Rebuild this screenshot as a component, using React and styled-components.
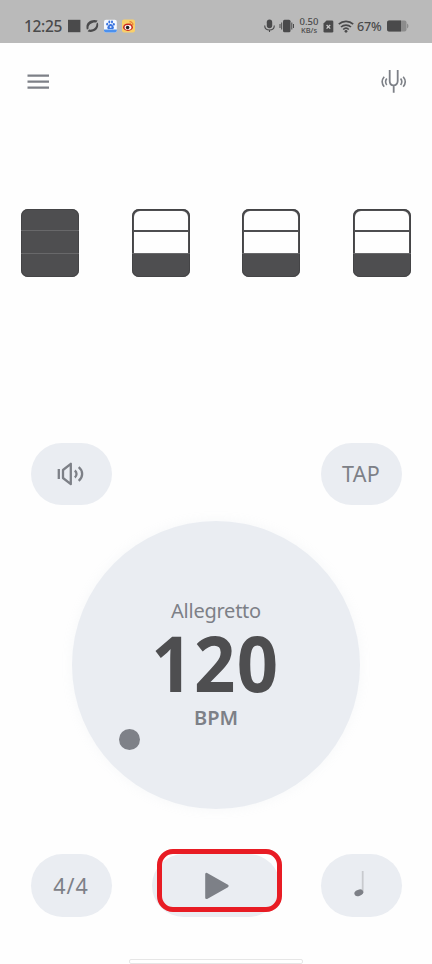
import React from 'react';
import styled, { createGlobalStyle } from 'styled-components';


const GlobalStyle = createGlobalStyle`
    * {
        box-sizing: border-box;
    }

    body {
        margin: 0;
        background-color: #fff;
        font-family: 'Noto Sans', 'Open Sans', sans-serif;
        color: #7d8087;
    }

    svg {
        display: block;
        flex: none;
    }
`;

const Screen = styled.div`
    display: flex;
    flex-direction: column;
    width: 432px;
    height: 964px;
    overflow: hidden;
    background-color: #fefefe;
`;

const StatusBar = styled.div`
    display: flex;
    justify-content: space-between;
    height: 43px;
    padding: 9px 23px 0 24px;
    background-color: #bababa;
    color: #4a4a4b;
`;

const StatusGroup = styled.div`
    display: flex;
    align-items: center;
    height: 34px;
`;

const Time = styled.span`
    width: 44px;
    font-size: 15.5px;
    font-weight: 500;
    line-height: 34px;
    letter-spacing: -0.35px;
`;

const Speed = styled.div`
    display: flex;
    flex-direction: column;
    align-items: center;
    width: 22px;
    margin: 0 3px 0 4px;
    font-size: 9.5px;
    font-weight: 500;
    line-height: 8px;
    white-space: nowrap;
`;

const SpeedUnit = styled.div`
    font-size: 7.5px;
    font-weight: 500;
`;

const Percent = styled.span`
    width: 26px;
    margin: 0 4px 0 3px;
    font-size: 12.5px;
    font-weight: 500;
    letter-spacing: -0.2px;
    white-space: nowrap;
`;

const Toolbar = styled.header`
    display: flex;
    justify-content: space-between;
    align-items: center;
    height: 77px;
    padding: 0 25px 0 27px;
`;

const Beats = styled.div`
    display: flex;
    justify-content: space-between;
    padding: 0 21px;
    margin-top: 89px;
`;

const Beat = styled.div`
    display: grid;
    grid-template-rows: 21px 23px 24px;
    width: 58px;
    height: 68px;
    border-radius: 7px;
    overflow: hidden;
    background-color: #4e4e50;
    box-shadow: inset 0 0 0 1px #444446;
`;

const Level = styled.div`
    margin: 2px 2px 0;
    border-radius: ${ ({ $top }) => $top ? '6px 6px 0 0' : '0' };
    background-color: ${ ({ $filled }) => $filled ? 'transparent' : '#fefefe' };
`;

const Line = styled.div`
    border-top: 1px solid #68686a;
`;

const Row = styled.div`
    display: flex;
    justify-content: space-between;
    padding: 0 30.5px;
    margin-top: ${ ({ $top }) => $top }px;
`;

const Pill = styled.button`
    display: flex;
    justify-content: center;
    align-items: center;
    width: ${ ({ $wide }) => $wide ? 128 : 81 }px;
    height: ${ ({ $height }) => $height || 62 }px;
    padding: 0 0 ${ ({ $lift }) => $lift || 0 }px;
    border: 0;
    border-radius: 32px;
    background-color: #eaedf2;
    color: #7d8087;
    font-family: inherit;
    font-size: 21.5px;
    letter-spacing: ${ ({ $spacing }) => $spacing || 0 }px;
`;

const PlayWrap = styled.div`
    position: relative;
`;

const Highlight = styled.div`
    position: absolute;
    top: -5px;
    left: 5px;
    width: 125px;
    height: 63px;
    border: 5px solid #e81c24;
    border-radius: 16px;
`;

const Dial = styled.div`
    position: relative;
    display: flex;
    flex-direction: column;
    align-items: center;
    width: 288px;
    height: 288px;
    padding-top: 76px;
    margin: 15.5px auto 0;
    border-radius: 50%;
    background-color: #eaedf2;
    box-shadow: 0 0 10px 2px rgba(200, 205, 215, 0.1);
`;

const Knob = styled.div`
    position: absolute;
    top: 208.5px;
    left: 47px;
    width: 21px;
    height: 21px;
    border-radius: 50%;
    background-color: #7e8188;
`;

const Tempo = styled.div`
    font-size: 20px;
    font-weight: 400;
    line-height: 27px;
    letter-spacing: -0.25px;
`;

const Bpm = styled.div`
    padding-right: 2px;
    font-size: 77px;
    font-weight: 700;
    line-height: 78px;
    margin-bottom: 2px;
    transform: scaleX(0.94);
    letter-spacing: 1.5px;
    color: #4e4e50;
`;

const Unit = styled.div`
    font-size: 20px;
    font-weight: 600;
    line-height: 28px;
`;

const HomeBar = styled.div`
    width: 174px;
    height: 5px;
    margin: 42px auto 0;
    border: 1px solid #e6e6e6;
    border-radius: 2px;
    background-color: #fff;
`;

const NotificationIcons = () => (
    <svg width="72" height="14" viewBox="0 0 72 14">
        <rect x="0" y="0.8" width="12.4" height="12.4" fill="#4a4a4b"/>
        <g fill="#4a4a4b">
            <path d="M19 10.800C16.500 4 23 -.5 29.600 1.600L28.200 3.600C24 2.800 19.800 6 20.600 9.400z"/>
            <path d="M29.700 3.400C32 9.500 26 14.500 19.600 12.400L21 10.600C25.500 11.400 28.800 8 28.400 4.800z"/>
        </g>
        <rect x="36" y="0.7" width="12.8" height="12.8" rx="2" fill="#f4f8ff"/>
        <path d="M36 10.5h12.8v1a2 2 0 0 1-2 2h-8.800a2 2 0 0 1-2-2z" fill="#4c91ee"/>
        <g fill="#3974df">
            <ellipse cx="39.2" cy="5.200" rx="1" ry="1.400"/>
            <ellipse cx="41.300" cy="3" rx="1" ry="1.400"/>
            <ellipse cx="44" cy="3" rx="1" ry="1.400"/>
            <ellipse cx="45.800" cy="5.300" rx="1" ry="1.400"/>
            <path d="M42.600 4.900c1.600 0 3.600 2.800 3.300 4.200-.3 1.700-2 .9-3.300.9s-3.100.8-3.300-.9c-.2-1.400 1.700-4.200 3.300-4.200z"/>
        </g>
        <circle cx="42.600" cy="8" r="1" fill="#d7e5fc"/>
        <rect x="54" y="0.500" width="13" height="13" rx="2" fill="#f9cf68"/>
        <ellipse cx="60" cy="8.200" rx="4.900" ry="3.700" fill="#c92822"/>
        <ellipse cx="60" cy="8.400" rx="3.400" ry="2.400" fill="#fff"/>
        <circle cx="59.600" cy="8.500" r="1.800" fill="#252022"/>
        <path d="M61.500 2.800c2.300-.4 3.800 1.300 3.300 3.400M61.700 4.600c1.100-.1 1.700.6 1.500 1.500" fill="none" stroke="#e6632a" strokeWidth="1"/>
    </svg>
);

const MicVibrateIcons = () => (
    <svg width="30" height="14" viewBox="0 0 30 14">
        <rect x="2.800" y="0.500" width="5.400" height="8.800" rx="2.700" fill="#4a4a4b"/>
        <path d="M.7 6.500c0 6 9.600 6 9.600 0M5.500 11v2" fill="none" stroke="#4a4a4b" strokeWidth="1.100"/>
        <rect x="19" y="0.800" width="7.500" height="12.400" rx="1.500" fill="#4a4a4b"/>
        <path d="M17.700 3.500v7M16 5v4M27.800 3.500v7M29.500 5v4" stroke="#4a4a4b" strokeWidth="1"/>
    </svg>
);

const SimIcon = () => (
    <svg width="11" height="13" viewBox="0 0 11 13">
        <path d="M3.500.5H9a1.300 1.300 0 0 1 1.300 1.300v9.400A1.300 1.300 0 0 1 9 12.500H1.800a1.300 1.300 0 0 1-1.300-1.300V3.500z" fill="#4a4a4b"/>
        <path d="M3.600 5l3.600 3.600M7.200 5L3.600 8.600" stroke="#cacaca" strokeWidth="1.300"/>
    </svg>
);

const WifiIcon = () => (
    <svg width="20" height="13" viewBox="-4 0 20 13">
        <g fill="none" stroke="#4a4a4b" strokeWidth="1.700">
            <path d="M.8 4.200c4-3.800 10.400-3.800 14.400 0"/>
            <path d="M3 7c2.800-2.600 7.200-2.600 10 0"/>
            <path d="M5.200 9.500c1.600-1.500 4-1.500 5.600 0"/>
        </g>
        <circle cx="8" cy="11.300" r="1.400" fill="#4a4a4b"/>
    </svg>
);

const BatteryIcon = () => (
    <svg width="22" height="12" viewBox="0 0 22 12">
        <rect x="0" y="0.500" width="19.500" height="11" rx="2" fill="#8c8c8c"/>
        <path d="M20 3.500c2 1 2 4 0 5z" fill="#8c8c8c"/>
        <path d="M2 .5h12v11H2a2 2 0 0 1-2-2v-7a2 2 0 0 1 2-2z" fill="#4a4a4b"/>
    </svg>
);

const MenuIcon = () => (
    <svg width="22" height="16" viewBox="0 0 22 16">
        <path d="M.5 1.700H22M.5 7.700H22M.5 13.700H22" stroke="#7d8087" strokeWidth="2.300"/>
    </svg>
);

const TunerIcon = () => (
    <svg width="26" height="24" viewBox="0 0 26 24" fill="none" stroke="#7d8087">
        <path d="M8.700 0v11c0 5.800 8 5.800 8 0V0M12.700 15.300v7.500" strokeWidth="1.800"/>
        <path d="M5.800 8.500c-1.500 2-1.500 4.500 0 6.500M3.200 6.700c-2.600 3.200-2.600 6.900 0 10.100M19.600 8.500c1.500 2 1.500 4.500 0 6.500M22.200 6.700c2.600 3.200 2.600 6.900 0 10.100" strokeWidth="1.600"/>
    </svg>
);

const SoundIcon = () => (
    <svg width="28" height="24" viewBox="0 0 28 24" fill="none" stroke="#7d8087" strokeWidth="2.300">
        <path d="M1.800 7v10"/>
        <path d="M6 8L13.800 1.800v20.400L6 16z" strokeLinejoin="round"/>
        <path d="M17.800 8.500c2.300 1.900 2.300 5.100 0 7M21.700 5.200c4.600 3.700 4.600 9.900 0 13.600"/>
    </svg>
);

const PlayIcon = () => (
    <svg width="26" height="28" viewBox="-1 0 26 28">
        <path d="M2.500 2.200v23.600L23.300 14z" fill="#7d8087" stroke="#7d8087" strokeWidth="2.600" strokeLinejoin="round"/>
    </svg>
);

const NoteIcon = () => (
    <svg width="16" height="30" viewBox="0 0 16 30">
        <path d="M9.700 0v22" stroke="#c8cace" strokeWidth="1.800"/>
        <ellipse cx="5.800" cy="21.800" rx="4.600" ry="3.100" fill="#7d8087" transform="rotate(-20 5.800 21.800)"/>
    </svg>
);

const BeatItem = ({ accent }) => (
    <Beat>
        <Level $top $filled = { accent }/>
        {accent ? <Line/> : <Level/>}
        <Line/>
    </Beat>
);

const beats = [true, false, false, false];

export default function App() {
    return (
        <Screen>
            <GlobalStyle/>
            <StatusBar>
                <StatusGroup>
                    <Time>12:25</Time>
                    <NotificationIcons/>
                </StatusGroup>
                <StatusGroup>
                    <MicVibrateIcons/>
                    <Speed>
                        <div>0.50</div>
                        <SpeedUnit>KB/s</SpeedUnit>
                    </Speed>
                    <SimIcon/>
                    <WifiIcon/>
                    <Percent>67%</Percent>
                    <BatteryIcon/>
                </StatusGroup>
            </StatusBar>
            <Toolbar>
                <MenuIcon/>
                <TunerIcon/>
            </Toolbar>
            <Beats>
                {beats.map((accent, i) => <BeatItem key = { i } accent = { accent }/>)}
            </Beats>
            <Row $top = { 166 }>
                <Pill><SoundIcon/></Pill>
                <Pill $spacing = { 0.3 } $lift = { 2 }>TAP</Pill>
            </Row>
            <Dial>
                <Tempo>Allegretto</Tempo>
                <Bpm>120</Bpm>
                <Unit>BPM</Unit>
                <Knob/>
            </Dial>
            <Row $top = { 45.5 }>
                <Pill $height = { 63 } $spacing = { 1 } $lift = { 1 }>4/4</Pill>
                <PlayWrap>
                    <Pill $wide $height = { 63 }><PlayIcon/></Pill>
                    <Highlight/>
                </PlayWrap>
                <Pill $height = { 63 }><NoteIcon/></Pill>
            </Row>
            <HomeBar/>
        </Screen>
    );
}
